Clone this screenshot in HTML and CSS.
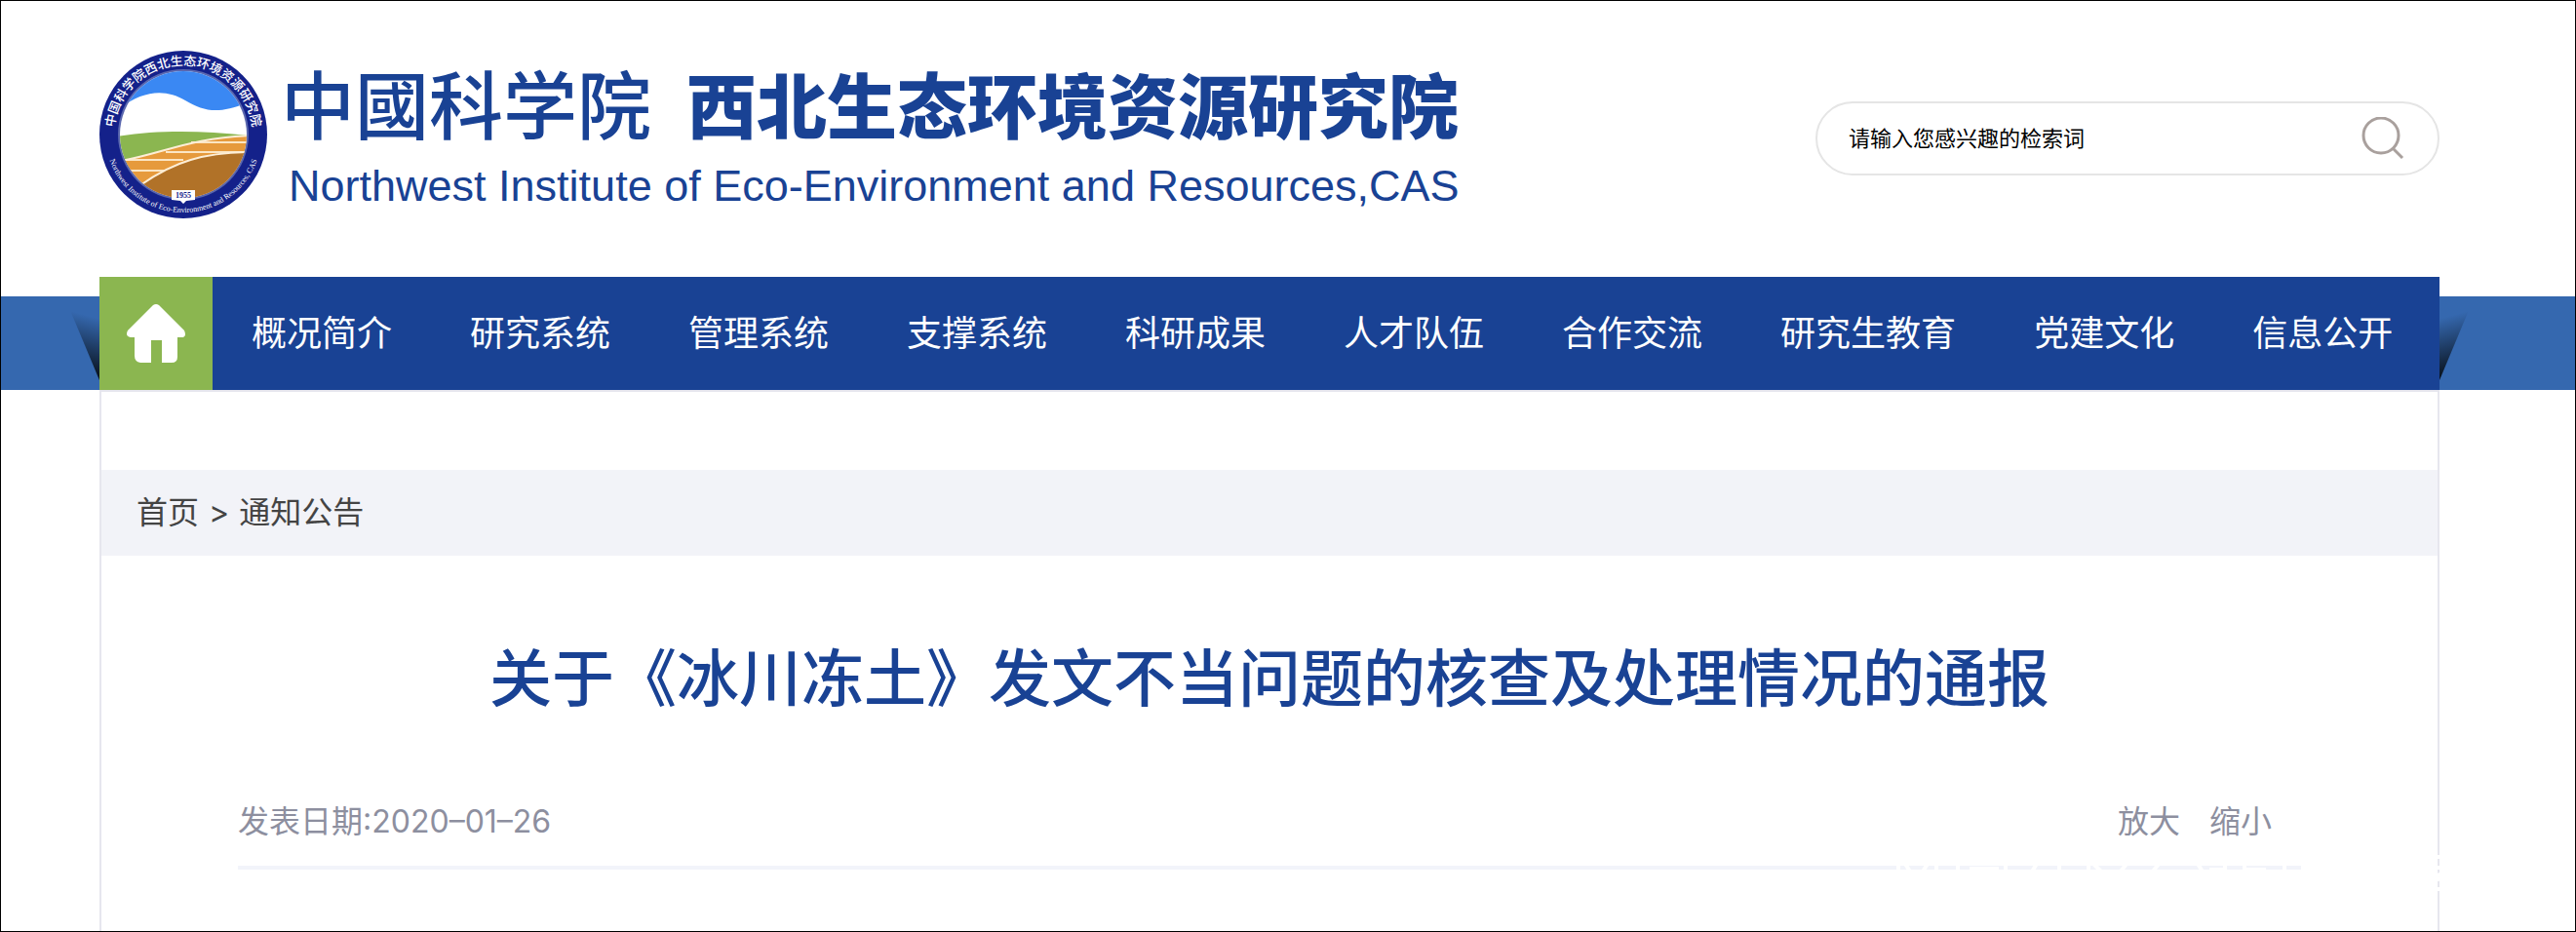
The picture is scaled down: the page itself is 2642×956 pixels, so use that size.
FILE: index.html
```html
<!DOCTYPE html>
<html lang="zh-CN">
    <head>
        <meta charset="utf-8" />
        <title>关于《冰川冻土》发文不当问题的核查及处理情况的通报</title>
        <meta name="viewport" content="width=device-width, initial-scale=1.0" />
        <link rel="stylesheet" href="styles.css">
    </head>

    <body>
        <header class="header">
            <a class="logo" href="#">
                <svg class="emblem" viewBox="0 0 172 172" aria-hidden="true">
                    <defs>
                        <clipPath id="inner"><circle cx="86" cy="86" r="65" /></clipPath>
                        <path id="arc-top" d="M15 86a71 71 0 0 1 142 0" />
                        <path id="arc-bottom" d="M6 86a80 80 0 0 0 160 0" />
                    </defs>
                    <circle cx="86" cy="86" r="86" fill="#14218a" />
                    <circle cx="86" cy="86" r="67" fill="#5a67ae" />
                    <g clip-path="url(#inner)">
                        <path fill="#fff" d="M20 20h132v132H20z" />
                        <path fill="#3a88f3" d="M20 60C45 40 68 39 88 51s35 14 64 2V15H20z" />
                        <path fill="#8bb650" d="M18 88c40-7 90-6 136-1l-60 30-76 5z" />
                        <path fill="#e69a3c" d="M22 113c40-7 72-23 134-26v70H22z" />
                        <path stroke="#fbe6c4" stroke-width="2" fill="none" d="M68 104h88M94 94h60M24 112h62M24 123h44" />
                        <path stroke="#fdeed6" stroke-width="2" fill="none" d="M22 113c44-8 72-24 134-26" />
                        <path fill="#b17228" stroke="#fdeed6" stroke-width="2" d="M42 138c34-24 64-34 118-34v50H60z" />
                    </g>
                    <path fill="#fff" d="M74 143h24v10l-9 1-3 3-3-3-9-1z" />
                    <text class="emblem-year" x="86" y="151">1955</text>
                    <text class="emblem-cn"><textPath href="#arc-top" startOffset="50%">中国科学院西北生态环境资源研究院</textPath></text>
                    <text class="emblem-en"><textPath href="#arc-bottom" startOffset="50%">Northwest Institute of Eco-Environment and Resources, CAS</textPath></text>
                </svg>
                <span class="logo-text">
                    <span class="logo-cn">
                        <span class="logo-cas">中國科学院</span>
                        <span class="logo-name">西北生态环境资源研究院</span>
                    </span>
                    <span class="logo-en">Northwest Institute of Eco-Environment and Resources,CAS</span>
                </span>
            </a>
            <form class="search">
                <input class="search-input" type="text" aria-label="检索词" value="请输入您感兴趣的检索词" />
                <button class="search-button" type="button" aria-label="检索">
                    <svg viewBox="0 0 44 44" aria-hidden="true">
                        <circle cx="20" cy="19" r="18" />
                        <path d="M32 32l10 10" />
                    </svg>
                </button>
            </form>
        </header>

        <div class="nav-strip">
            <nav class="nav">
                <a class="nav-home" href="#" aria-label="首页">
                    <svg viewBox="0 0 60 60" aria-hidden="true">
                        <path d="M27 1q3-2 6 0l26 26q3 7-3 7h-4v20q0 6-6 6H36V37H25v23H14q-6-1-6-7V34H4q-6-1-3-7z" />
                    </svg>
                </a>
                <a href="#">概况简介</a>
                <a href="#">研究系统</a>
                <a href="#">管理系统</a>
                <a href="#">支撑系统</a>
                <a href="#">科研成果</a>
                <a href="#">人才队伍</a>
                <a href="#">合作交流</a>
                <a href="#">研究生教育</a>
                <a href="#">党建文化</a>
                <a href="#">信息公开</a>
            </nav>
        </div>

        <main class="main">
            <div class="breadcrumb">
                <a href="#">首页</a>
                <span>&gt;</span>
                <a href="#">通知公告</a>
            </div>
            <article class="article">
                <h1>关于《冰川冻土》发文不当问题的核查及处理情况的通报</h1>
                <div class="meta">
                    <span>发表日期:2020–01–26</span>
                    <div class="zoom">
                        <button type="button">放大</button>
                        <button type="button">缩小</button>
                    </div>
                    <!-- white watermark strokes, only seen where they cross a line -->
                    <svg class="watermark" viewBox="0 0 580 48" aria-hidden="true">
                        <path d="M17 16v8M24 16l5 8M47 16l-5 8M56 16v8M78 16v8M90 21h30M86 16h6M119 16h6M127 16v8M159 16l-5 8M182 16v8M212 16v8M217 16l8 8M251 16l-6 8M284 16l-6 8M324 16l5 8M336 22h14M352 16v8M372 16v8M374 22h20M413 16v8" />
                        <path d="M566 9h8M566 20h8M566 30l8-4M566 33l8-2M566 42h8" />
                    </svg>
                </div>
            </article>
        </main>
    </body>
</html>
```
FILE: styles.css
```css
* {
    box-sizing: border-box;
}

body {
    margin: 0;
    min-height: 100vh;
    display: flex;
    flex-direction: column;
    border: 1px solid #000;
    background: #fff;
    color: #444;
    font-family: Inter, "Noto Sans CJK SC", sans-serif;
    font-size: 32px;
}

a {
    color: inherit;
    text-decoration: none;
}

button,
input {
    padding: 0;
    border: 0;
    background: none;
    color: inherit;
    font: inherit;
}

.header {
    display: flex;
    justify-content: space-between;
    align-items: flex-start;
    padding: 51px 139px 0 101px;
    height: 283px;
}

/* logo */
.logo {
    display: flex;
    gap: 14px;
    color: #194294;
}

.emblem {
    width: 172px;
    height: 172px;
}

.emblem text {
    fill: #fff;
    text-anchor: middle;
}

.emblem .emblem-year {
    fill: #14218a;
    font: bold 8px "Liberation Serif", serif;
}

.emblem-cn {
    font: 500 13px "Noto Sans CJK SC", sans-serif;
}

.emblem-en {
    font: 8px "Liberation Serif", serif;
}

.logo-text {
    display: flex;
    flex-direction: column;
    font-family: "Liberation Sans", "Noto Sans CJK SC", sans-serif;
}

.logo-cn {
    display: flex;
    align-items: center;
    gap: 36px;
    height: 104px;
    white-space: nowrap;
}

.logo-cas {
    font-size: 76px;
    font-weight: 500;
}

.logo-name {
    font-size: 72px;
    font-weight: 900;
}

.logo-en {
    padding-left: 8px;
    font-size: 45px;
    line-height: 70px;
    white-space: nowrap;
}

/* search */
.search {
    display: flex;
    align-items: center;
    width: 640px;
    height: 76px;
    margin-top: 52px;
    padding: 0 34px 0 32px;
    border: 2px solid #e5e5e5;
    border-radius: 38px;
}

.search-input {
    flex: 1;
    padding-bottom: 4px;
    color: #000;
    font-size: 22px;
    outline: none;
}

.search-button {
    width: 44px;
    height: 44px;
}

.search-button svg {
    display: block;
    fill: none;
    stroke: #a9a09d;
    stroke-width: 3;
}

/* navigation */
.nav-strip {
    padding: 0 139px 0 101px;
    background: linear-gradient(#fff 20px, #3568af 20px);
}

.nav {
    position: relative;
    display: flex;
    height: 116px;
    background: #194294;
    color: #fff;
    font-size: 36px;
    line-height: 116px;
    white-space: nowrap;
}

/* folded corners on both ends of the bar */
.nav::before,
.nav::after {
    content: "";
    position: absolute;
    top: 20px;
    width: 36px;
    height: 86px;
}

.nav::before {
    right: 100%;
    background: linear-gradient(195deg, #3568af 24%, #0a1420 86%);
    clip-path: polygon(0 0, 100% 0, 100% 100%);
}

.nav::after {
    left: 100%;
    background: linear-gradient(165deg, #3568af 24%, #0a1420 86%);
    clip-path: polygon(0 0, 100% 0, 0 100%);
}

.nav a {
    padding: 0 40px;
}

.nav .nav-home {
    display: flex;
    align-items: center;
    justify-content: center;
    width: 116px;
    padding: 0;
    background: #8bb650;
}

.nav-home svg {
    width: 60px;
    height: 60px;
    fill: #fff;
}

/* content */
.main {
    flex: 1;
    margin: 0 139px 0 101px;
    padding-top: 80px;
    border: solid #e6e6ee;
    border-width: 2px 2px 0;
}

.breadcrumb {
    display: flex;
    gap: 10px;
    padding: 0 36px;
    background: #f2f3f8;
    line-height: 88px;
}

.article {
    padding: 78px 140px 0;
}

h1 {
    margin: 0;
    color: #194294;
    font-size: 64px;
    font-weight: 500;
    line-height: 96px;
    text-align: center;
}

.meta {
    position: relative;
    display: flex;
    justify-content: space-between;
    margin-top: 54px;
    border-bottom: 4px solid #f2f4fa;
    color: #8d8f9f;
    line-height: 90px;
}

.zoom {
    display: flex;
    gap: 30px;
    padding-right: 30px;
}

.watermark {
    position: absolute;
    right: -150px;
    bottom: -30px;
    width: 580px;
    height: 48px;
    fill: none;
    stroke: #fff;
    stroke-width: 4;
}
```
